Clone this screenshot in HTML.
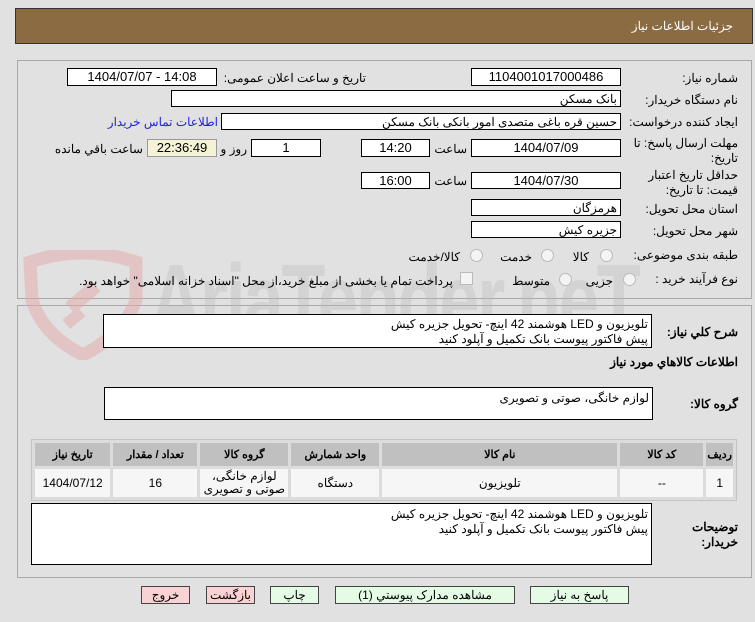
<!DOCTYPE html>
<html><head><meta charset="utf-8">
<style>
body{margin:0;width:755px;height:622px;background:#e1e1e1;font-family:"Liberation Sans","Noto Sans CJK SC",sans-serif;font-size:12px;color:#000;position:relative;overflow:hidden}
.a{position:absolute}
.hdr{left:15px;top:8px;width:736px;height:34px;background:#8b6b42;border:1px solid #333}
.hdr span{position:absolute;right:19px;top:10px;color:#fff;font-size:12px}
.pn{left:17px;width:733px;border:1px solid #a8a8a8}
.bx{position:absolute;background:#fff;border:1px solid #000;box-sizing:border-box;text-align:center;line-height:16px;font-size:13px}
.bx.r{text-align:right;padding-right:3px;font-size:12px}
.lb{position:absolute;direction:rtl;white-space:nowrap;font-size:12px}
.b{font-weight:bold}
.ta{position:absolute;background:#fff;border:1px solid #000;box-sizing:border-box;direction:rtl;text-align:right;padding:3px 3px;line-height:15px;font-size:12px}
.rd{position:absolute;width:11px;height:11px;border-radius:50%;border:1px solid #bbb;background:#f4f4f4}
table{position:absolute;left:31px;top:439px;width:706px;border-collapse:separate;border-spacing:3px;background:#dcdcdc;border:1px solid #c4c4c4;direction:rtl}
th{background:#c0c0c0;height:21px;font-size:11px}
td{background:#f6f6f6;height:26px;text-align:center;font-size:12px;line-height:13px}
.btn{position:absolute;top:586px;height:18px;border:1px solid #444;box-sizing:border-box;text-align:center;line-height:16px;font-size:12px}
.g{background:#e6fbe6}.p{background:#f9d3d3}
</style></head><body>
<div class="a hdr"><span>جزئیات اطلاعات نیاز</span></div>
<div class="a pn" style="top:60px;height:237px"></div>
<div class="a pn" style="top:305px;height:271px"></div>
<!-- watermark -->
<svg class="a" style="left:18px;top:250px;opacity:.5" width="130" height="110" viewBox="0 0 130 110"><path d="M12 12 Q65 -6 118 12 L118 50 Q105 85 65 105 Q25 85 14 50 Z" fill="none" stroke="#e6a8a8" stroke-width="13"/><rect x="48" y="40" width="34" height="14" fill="#e6a8a8" transform="rotate(-40 65 47)"/><rect x="46" y="62" width="20" height="12" fill="#e6a8a8" transform="rotate(-40 56 68)"/></svg>
<div class="a" style="left:150px;top:245px;font-size:100px;font-weight:bold;color:#bbb;opacity:.35;font-family:'Liberation Sans',sans-serif;letter-spacing:-3px;transform:scaleX(.72);transform-origin:left;line-height:110px">AriaTender.neT</div>

<div class="lb" style="right:17px;top:71px">شماره نیاز:</div>
<div class="bx" style="left:471px;top:68px;width:150px;height:18px">1104001017000486</div>
<div class="lb" style="right:389px;top:71px">تاریخ و ساعت اعلان عمومی:</div>
<div class="bx" style="left:67px;top:68px;width:150px;height:18px">1404/07/07 - 14:08</div>

<div class="lb" style="right:17px;top:93px">نام دستگاه خریدار:</div>
<div class="bx r" style="left:171px;top:90px;width:450px;height:17px;direction:rtl">بانک مسکن</div>

<div class="lb" style="right:17px;top:115px">ایجاد کننده درخواست:</div>
<div class="bx r" style="left:221px;top:113px;width:400px;height:17px;direction:rtl">حسین  قره باغی متصدی امور بانکی بانک مسکن</div>
<div class="lb" style="right:537px;top:115px;color:#2222dd">اطلاعات تماس خریدار</div>

<div class="lb" style="right:17px;top:136px;line-height:15px;text-align:right">مهلت ارسال پاسخ: تا<br>تاریخ:</div>
<div class="bx" style="left:471px;top:139px;width:150px;height:18px">1404/07/09</div>
<div class="lb" style="right:288px;top:142px">ساعت</div>
<div class="bx" style="left:361px;top:139px;width:69px;height:18px">14:20</div>
<div class="bx" style="left:251px;top:139px;width:70px;height:18px">1</div>
<div class="lb" style="right:508px;top:142px">روز و</div>
<div class="bx" style="left:147px;top:139px;width:70px;height:18px;background:#f5f3d6;border-color:#999">22:36:49</div>
<div class="lb" style="right:612px;top:142px">ساعت باقي مانده</div>

<div class="lb" style="right:17px;top:168px;line-height:15px;text-align:right">حداقل تاریخ اعتبار<br>قیمت: تا تاریخ:</div>
<div class="bx" style="left:471px;top:172px;width:150px;height:17px">1404/07/30</div>
<div class="lb" style="right:288px;top:174px">ساعت</div>
<div class="bx" style="left:361px;top:172px;width:69px;height:17px">16:00</div>

<div class="lb" style="right:17px;top:202px">استان محل تحویل:</div>
<div class="bx r" style="left:471px;top:199px;width:150px;height:17px;direction:rtl">هرمزگان</div>
<div class="lb" style="right:17px;top:224px">شهر محل تحویل:</div>
<div class="bx r" style="left:471px;top:221px;width:150px;height:17px;direction:rtl">جزیره کیش</div>

<div class="lb" style="right:17px;top:248px">طبقه بندی موضوعی:</div>
<div class="rd" style="left:600px;top:249px"></div><div class="lb" style="right:166px;top:250px">کالا</div>
<div class="rd" style="left:541px;top:249px"></div><div class="lb" style="right:223px;top:250px">خدمت</div>
<div class="rd" style="left:470px;top:249px"></div><div class="lb" style="right:295px;top:250px">کالا/خدمت</div>

<div class="lb" style="right:17px;top:272px">نوع فرآیند خرید :</div>
<div class="rd" style="left:623px;top:273px"></div><div class="lb" style="right:142px;top:274px">جزیی</div>
<div class="rd" style="left:559px;top:273px"></div><div class="lb" style="right:205px;top:274px">متوسط</div>
<div class="a" style="left:460px;top:272px;width:11px;height:11px;border:1px solid #bbb;background:#f4f4f4"></div>
<div class="lb" style="right:302px;top:274px">پرداخت تمام یا بخشی از مبلغ خرید،از محل "اسناد خزانه اسلامی" خواهد بود.</div>

<div class="lb b" style="right:17px;top:325px">شرح کلي نياز:</div>
<div class="ta" style="left:103px;top:314px;width:549px;height:34px;padding-top:2px">تلویزیون و LED هوشمند 42 اینچ- تحویل جزیره کیش<br>پیش فاکتور پیوست بانک تکمیل و آپلود کنید</div>
<div class="lb b" style="right:17px;top:355px">اطلاعات کالاهاي مورد نياز</div>
<div class="lb b" style="right:17px;top:397px">گروه کالا:</div>
<div class="ta" style="left:104px;top:387px;width:549px;height:33px">لوازم خانگی، صوتی و تصویری</div>

<table><tr><th style="width:24px">ردیف</th><th style="width:81px">کد کالا</th><th style="width:233px">نام کالا</th><th style="width:86px">واحد شمارش</th><th style="width:86px">گروه کالا</th><th style="width:82px">تعداد / مقدار</th><th>تاریخ نیاز</th></tr>
<tr><td>1</td><td>--</td><td>تلویزیون</td><td>دستگاه</td><td>لوازم خانگی،<br>صوتی و تصویری</td><td>16</td><td>1404/07/12</td></tr></table>

<div class="lb b" style="right:17px;top:520px;line-height:15px;text-align:right">توضیحات<br>خریدار:</div>
<div class="ta" style="left:31px;top:503px;width:621px;height:62px">تلویزیون و LED هوشمند 42 اینچ- تحویل جزیره کیش<br>پیش فاکتور پیوست بانک تکمیل و آپلود کنید</div>

<div class="btn p" style="left:141px;width:49px">خروج</div>
<div class="btn p" style="left:206px;width:49px">بازگشت</div>
<div class="btn g" style="left:270px;width:49px">چاپ</div>
<div class="btn g" style="left:335px;width:180px">مشاهده مدارک پیوستي (1)</div>
<div class="btn g" style="left:530px;width:99px">پاسخ به نیاز</div>
</body></html>
